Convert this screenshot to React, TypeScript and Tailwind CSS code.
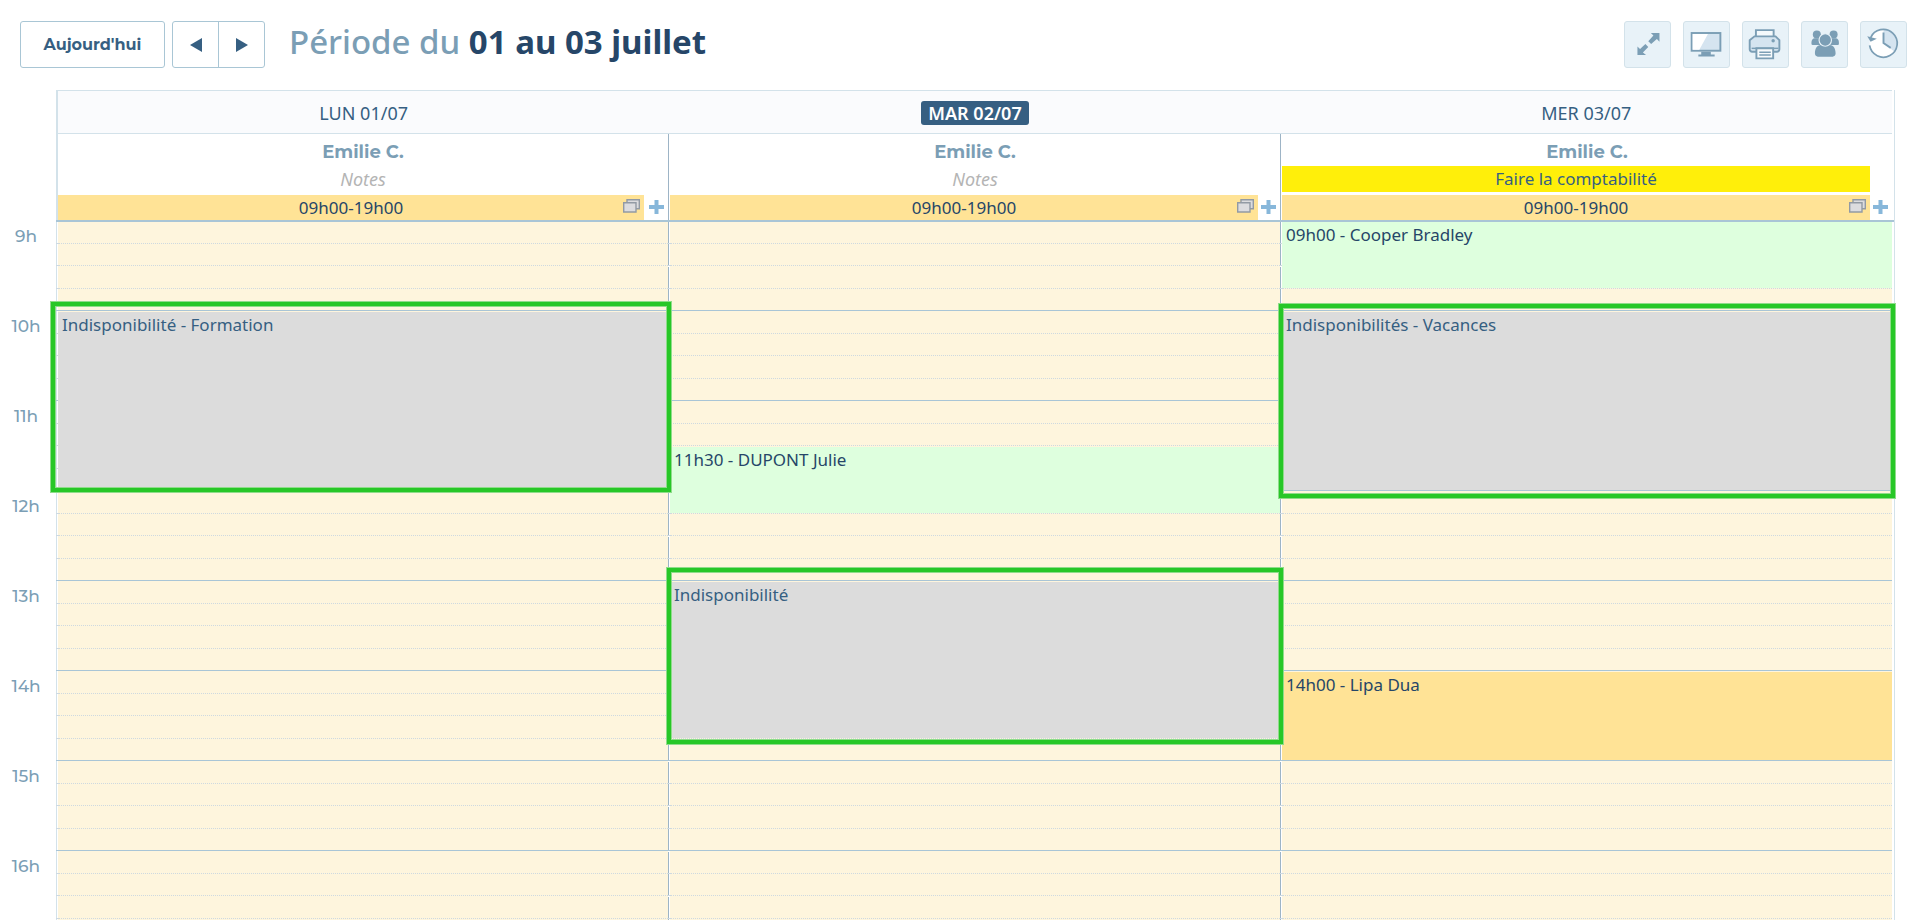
import React from "react";

type Appointment = {
  label: string;
  start: number;
  span: number;
  tone: string;
  outline?: string;
};

type Day = {
  label: string;
  today?: boolean;
  note?: string;
  appointments: Appointment[];
};

const HOURS = ["9h", "10h", "11h", "12h", "13h", "14h", "15h", "16h"];
const SLOTS = HOURS.length * 4;

const DAYS: Day[] = [
  {
    label: "LUN 01/07",
    appointments: [
      {
        label: "Indisponibilité - Formation",
        start: 4,
        span: 8,
        tone: "bg-[#dcdcdc] text-[#365f82]",
        outline: "-left-[7px] -right-[3px] -top-[10px] -bottom-[2px]",
      },
    ],
  },
  {
    label: "MAR 02/07",
    today: true,
    appointments: [
      { label: "11h30 - DUPONT Julie", start: 10, span: 3, tone: "bg-[#deffde] text-[#264668]" },
      {
        label: "Indisponibilité",
        start: 16,
        span: 7,
        tone: "bg-[#dcdcdc] text-[#365f82]",
        outline: "-left-[3px] -right-[3px] -top-[14px] -bottom-[6px]",
      },
    ],
  },
  {
    label: "MER 03/07",
    note: "Faire la comptabilité",
    appointments: [
      { label: "09h00 - Cooper Bradley", start: 0, span: 3, tone: "bg-[#deffde] text-[#264668]" },
      {
        label: "Indisponibilités - Vacances",
        start: 4,
        span: 8,
        tone: "bg-[#dcdcdc] text-[#365f82]",
        outline: "-left-[3px] -right-[3px] -top-[8px] -bottom-[8px]",
      },
      { label: "14h00 - Lipa Dua", start: 20, span: 4, tone: "bg-[#ffe396] text-[#264668]" },
    ],
  },
];

function ExpandIcon() {
  return (
    <svg viewBox="0 0 47 47" className="size-full" fill="#7b9eb5">
      <path d="M27 11.500h9v9l-2.700-2.700-6 5.200-3-3 5.400-5.800z" />
      <path d="M13 34.500v-9l2.700 2.700 5.600-5.200 3 3-5.600 5.800 3.300 2.700z" />
    </svg>
  );
}

function ScreenIcon() {
  return (
    <svg viewBox="0 0 47 47" className="size-full">
      <rect x="8" y="11.500" width="30" height="18.500" fill="#d5e4f0" stroke="#7b9eb5" strokeWidth="2" />
      <path d="M9 12.500h16l-9 16.500H9z" fill="#fff" />
      <path d="M18 31h10v3h4v2H15v-2h3z" fill="#7b9eb5" />
    </svg>
  );
}

function PrinterIcon() {
  return (
    <svg viewBox="0 0 47 47" className="size-full" stroke="#7b9eb5" strokeWidth="2" fill="#d5e4f0">
      <path d="M13.500 15V8.500h18.500V15" fill="#f4f9fc" />
      <path d="M12 15h22l4 4v9.500a2.500 2.500 0 0 1-2.500 2.500h-26A2.500 2.500 0 0 1 7 28.500V19z" />
      <circle cx="31.500" cy="19.500" r=".8" fill="#7b9eb5" />
      <path d="M9 27.500h28" strokeWidth="1.500" />
      <path d="M14 27.500h17.500V38H14z" fill="#f7fafc" />
      <path d="M17 31.500h12M17 34.500h12" strokeWidth="1.500" />
    </svg>
  );
}

function GroupIcon() {
  return (
    <svg viewBox="0 0 47 47" className="size-full" fill="#7b9eb5">
      <circle cx="15.500" cy="13" r="4.200" />
      <circle cx="33" cy="13" r="4.200" />
      <path d="M10 23.500c-.5-4.500 1-6.500 4-6.500h5v7h-8zM38.500 23.500c.5-4.500-1-6.500-4-6.500h-5v7h8z" />
      <circle cx="24.300" cy="18.800" r="6.500" stroke="#e8f2f8" strokeWidth="1.200" />
      <path d="M13.500 33c0-5 2-9 6-9 3 2.300 6.600 2.300 9.600 0 4 0 6 4 6 9 0 2-1.500 3.200-3 3.200H16.500c-1.500 0-3-1.200-3-3.200z" />
    </svg>
  );
}

function HistoryIcon() {
  return (
    <svg viewBox="0 0 47 47" className="size-full" fill="none">
      <circle cx="23.500" cy="22" r="14.500" fill="#fff" />
      <path d="M23.500 22V7.500A14.500 14.500 0 0 1 35 31z" fill="#d5e4f0" />
      <path d="M10 16.500A14.500 14.500 0 1 1 9 24.500" stroke="#7b9eb5" strokeWidth="1.800" />
      <path d="M23.500 11v11l7.500 5" stroke="#7b9eb5" strokeWidth="2" />
      <path d="M6.500 15l10 2.500-6.500 3z" fill="#7b9eb5" />
    </svg>
  );
}

const TOOLS = [
  { name: "Plein écran", icon: <ExpandIcon /> },
  { name: "Affichage", icon: <ScreenIcon /> },
  { name: "Imprimer", icon: <PrinterIcon /> },
  { name: "Équipe", icon: <GroupIcon /> },
  { name: "Historique", icon: <HistoryIcon /> },
];

function Toolbar() {
  return (
    <header className="flex items-start pt-[21px] pr-[15px] pb-[22px] pl-5">
      <button className="h-[47px] w-[145px] rounded-[3px] border border-[#a9c6d5] font-[Montserrat,Inter,sans-serif] text-[16px] font-bold text-[#365f82]">
        Aujourd'hui
      </button>
      <div className="ml-[7px] flex h-[47px] w-[93px] rounded-[3px] border border-[#a9c6d5]">
        <button aria-label="Précédent" className="flex flex-1 items-center justify-center border-r border-[#a9c6d5]">
          <svg viewBox="0 0 12 14" className="h-[14px] w-3" fill="#365f82">
            <path d="M12 0v14L0 7z" />
          </svg>
        </button>
        <button aria-label="Suivant" className="flex flex-1 items-center justify-center">
          <svg viewBox="0 0 12 14" className="h-[14px] w-3" fill="#365f82">
            <path d="M0 0v14l12-7z" />
          </svg>
        </button>
      </div>
      <h1 className="ml-6 text-[33px] leading-[42px] font-medium text-[#7b9eb5]">
        Période du <strong className="font-bold text-[#264668]">01 au 03 juillet</strong>
      </h1>
      <div className="ml-auto flex gap-3">
        {TOOLS.map((tool) => (
          <button
            key={tool.name}
            aria-label={tool.name}
            className="size-[47px] rounded-[3px] border border-[#d3e2ea] bg-[#e8f2f8]"
          >
            {tool.icon}
          </button>
        ))}
      </div>
    </header>
  );
}

function DayInfo({ day, first }: { day: Day; first: boolean }) {
  return (
    <div className={first ? "pl-[2px]" : "border-l border-[#9db4c6] pl-px"}>
      <div className="pt-1 text-center font-[Montserrat,Inter,sans-serif] text-[18px] leading-7 font-bold text-[#7b9eb5]">
        Emilie C.
      </div>
      {day.note ? (
        <div className="mr-[22px] h-[26px] bg-[#ffef0a] text-center text-[17px] leading-[26px] text-[#365f82]">
          {day.note}
        </div>
      ) : (
        <div className="h-[26px] text-center text-[18px] leading-[26px] text-[#b4b4b4] italic">Notes</div>
      )}
      <div className="mt-[3px] flex h-[25px]">
        <div className="relative flex-1 bg-[#ffe396] text-center text-[17px] leading-[25px] text-[#264668]">
          09h00-19h00
          <button aria-label="Dupliquer" className="absolute top-1 right-1">
            <svg viewBox="0 0 17 14" className="h-[14px] w-[17px]" fill="#dcdcdf" stroke="#929aa4">
              <path d="M4 .7h12.300v9H4z" strokeWidth="1.400" />
              <path d="M.7 3.700h12.300v9.300H.7z" strokeWidth="1.400" />
            </svg>
          </button>
        </div>
        <button
          aria-label="Ajouter"
          className={`flex items-start justify-center pt-[5px] ${first ? "w-6" : "w-[22px] pr-[2px]"}`}
        >
          <svg viewBox="0 0 15 14" className="h-[14px] w-[15px]" fill="#87b7da">
            <path d="M5.500 0h4v5H15v4H9.500v5h-4V9H0V5h5.500z" />
          </svg>
        </button>
      </div>
    </div>
  );
}

function DayColumn({ day, first }: { day: Day; first: boolean }) {
  const edge = first ? "border-[#d3e2ea]" : "border-[#9db4c6]";
  return (
    <div className="grid auto-rows-[23px_22px] grid-cols-[2px_minmax(0,1fr)]">
      {Array.from({ length: SLOTS }, (_, i) => {
        const rule = i % 4 === 3 ? "border-b border-solid border-b-[#a9c5d6]" : "border-b border-dotted border-b-[#ced9e0]";
        const row = { gridRow: i + 1 };
        return (
          <React.Fragment key={i}>
            <div style={row} className={`col-start-1 flex ${rule}`}>
              <div className={`border-l ${edge} ${i % 2 === 0 && !first ? "mt-px" : ""}`} />
            </div>
            <div style={row} className={`col-start-2 bg-[#fef5dd] ${rule}`} />
          </React.Fragment>
        );
      })}
      {day.appointments.map((a) => (
        <article
          key={a.label}
          style={{ gridRow: `${a.start + 1} / span ${a.span}` }}
          className={`relative col-start-2 my-px pl-1 text-[17px] leading-[26px] ${a.tone} ${a.outline ? "z-10" : ""}`}
        >
          {a.label}
          {a.outline && (
            <span
              className={`absolute border-4 border-[#27c727] shadow-[0_0_0_1px_#8fdc8a,inset_0_0_0_1px_#8fdc8a] ${a.outline}`}
            />
          )}
        </article>
      ))}
    </div>
  );
}

export default function App() {
  return (
    <div className="h-screen overflow-hidden bg-white font-['Noto_Sans',sans-serif]">
      <Toolbar />
      <main className="flex pr-[27px]">
        <div className="w-14 shrink-0 pt-[131px] pr-1 text-center font-[Montserrat,Inter,sans-serif] text-[17px] font-medium text-[#7b9eb5]">
          {HOURS.map((hour) => (
            <div key={hour} className="h-[90px] leading-[30px]">
              {hour}
            </div>
          ))}
        </div>
        <div className="min-w-0 flex-1 border-r border-[#d3e2ea]">
          <div className="border-l-2 border-[#d3e2ea] pr-[2px]">
            <div className="grid h-11 grid-cols-3 items-end border-y border-[#d3e2ea] bg-[#fafbfd] pb-2 text-center text-[18px] leading-6 text-[#365f82]">
              {DAYS.map((day) => (
                <div key={day.label}>
                  {day.today ? (
                    <strong className="inline-block rounded-[3px] bg-[#365f82] px-[7px] align-top font-semibold text-white">
                      {day.label}
                    </strong>
                  ) : (
                    day.label
                  )}
                </div>
              ))}
            </div>
          </div>
          <div className="relative border-b-2 border-[#a9c5d6] pr-[2px]">
            <div className="absolute inset-y-0 left-0 w-[2px] bg-[#d3e2ea]" />
            <div className="grid grid-cols-3">
              {DAYS.map((day, i) => (
                <DayInfo key={day.label} day={day} first={i === 0} />
              ))}
            </div>
          </div>
          <div className="-mt-px grid grid-cols-3 pr-[2px]">
            {DAYS.map((day, i) => (
              <DayColumn key={day.label} day={day} first={i === 0} />
            ))}
          </div>
        </div>
      </main>
    </div>
  );
}
